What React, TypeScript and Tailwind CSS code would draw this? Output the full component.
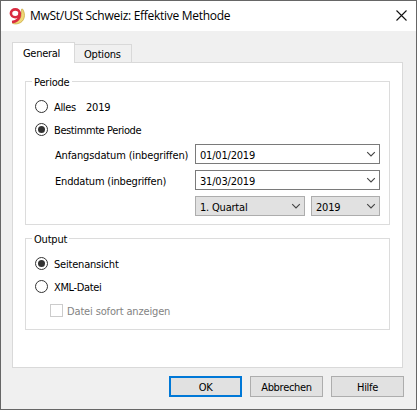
import React from 'react';

const Chevron = () => (
  <svg className="block h-[6px] w-[10px] shrink-0" viewBox="0 0 10 6" fill="none">
    <path d="M1.2 1.2L5 5L8.8 1.2" stroke="#444" strokeWidth="1.1" />
  </svg>
);

const Radio = ({ checked = false }: { checked?: boolean }) => (
  <span className="flex h-[13px] w-[13px] shrink-0 items-center justify-center rounded-full border border-[#333] bg-white">
    {checked && <span className="h-[7px] w-[7px] rounded-full bg-[#333]" />}
  </span>
);

const Combo = ({ text, size, muted = false }: { text: string; size: string; muted?: boolean }) => (
  <div
    className={`flex h-5 items-center justify-between border pr-[3px] pl-1 ${size} ${
      muted ? 'border-[#adadad] bg-[#e1e1e1]' : 'border-[#7a7a7a] bg-white'
    }`}
  >
    <span className="pt-[3px]">{text}</span>
    <Chevron />
  </div>
);

const Group = ({ title, size, children }: { title: string; size: string; children: React.ReactNode }) => (
  <section className={`w-[365px] border border-[#dcdcdc] ${size}`}>
    <h2 className="ml-[6px] -mt-[7px] h-[14px] w-fit bg-white px-[2px] leading-[16px]">{title}</h2>
    {children}
  </section>
);

const Button = ({ text, primary = false }: { text: string; primary?: boolean }) => (
  <button
    className={`flex h-[21px] w-[73px] items-center justify-center bg-[#e1e1e1] tracking-[-0.3px] ${
      primary ? 'border-2 border-[#0078d7]' : 'border border-[#adadad]'
    }`}
  >
    <span className="pt-[2px]">{text}</span>
  </button>
);

export default function App() {
  return (
    <div className="flex h-[410px] w-[417px] flex-col overflow-hidden border border-[#666] bg-[#f0f0f0] font-['DejaVu_Sans_Condensed','DejaVu_Sans',sans-serif] text-[11px] leading-[14px] tracking-[-0.2px] whitespace-nowrap text-black">
      <header className="flex h-[30px] shrink-0 items-center justify-between bg-white pr-[9px] pl-[8px]">
        <div className="flex items-center gap-[5px]">
          <svg className="h-[17px] w-4" viewBox="0 0 16 17" fill="none">
            <path d="M13.500 1C17 6 16 14 9 15.600C6.500 16.200 4.500 16 3.500 15C10 14 13.500 9 12.500 1.200Z" fill="#f0d878" stroke="#c4a436" strokeWidth="0.7" />
            <ellipse cx="6.3" cy="5.3" rx="4.4" ry="3.9" stroke="#d92b40" strokeWidth="2.6" />
            <path d="M10.700 4.500C11.400 10 8.500 13.600 3 14" stroke="#d92b40" strokeWidth="2.6" />
          </svg>
          <h1 className="font-['Open_Sans','Noto_Sans',sans-serif] text-[12px] leading-4 tracking-[-0.28px]">MwSt/USt Schweiz: Effektive Methode</h1>
        </div>
        <svg className="mb-px h-[11px] w-[11px]" viewBox="0 0 11 11" fill="none">
          <path d="M0.5 0.5L10.5 10.5M10.5 0.5L0.5 10.5" stroke="#111" strokeWidth="1.1" />
        </svg>
      </header>

      <div className="mt-[11px] ml-[11px] flex h-[21px] shrink-0 items-end">
        <div className="relative z-10 h-[21px] w-[63px] border border-b-0 border-[#d9d9d9] bg-white pt-[4px] pl-[10px] tracking-[-0.3px]">General</div>
        <div className="h-[19px] w-[57px] border border-l-0 border-[#d9d9d9] bg-[#f0f0f0] pt-[3px] pl-[9px]">Options</div>
      </div>

      <main className="-mt-px ml-[11px] h-[306px] w-[391px] shrink-0 border border-[#d9d9d9] bg-white pt-[18px] pl-[12px]">
        <Group title="Periode" size="h-[144px]">
          <div className="flex flex-col pl-[9px]">
            <div className="mt-[11px] flex h-[14px] items-start">
              <Radio />
              <span className="ml-[6px] w-8 pt-px tracking-[-0.35px]">Alles</span>
              <span className="pt-px">2019</span>
            </div>
            <div className="mt-[9px] flex h-[14px] items-start gap-[6px]">
              <Radio checked />
              <span className="pt-px tracking-[-0.4px]">Bestimmte Periode</span>
            </div>
          </div>
          <div className="mt-[7px] ml-[29px] grid grid-cols-[140px_185px] gap-y-[6px]">
            <span className="h-5 leading-[24px] tracking-[-0.15px]">Anfangsdatum (inbegriffen)</span>
            <Combo text="01/01/2019" size="w-[185px]" />
            <span className="h-5 leading-[24px]">Enddatum (inbegriffen)</span>
            <Combo text="31/03/2019" size="w-[185px]" />
            <div className="col-start-2 flex justify-between">
              <Combo text="1. Quartal" size="w-[110px]" muted />
              <Combo text="2019" size="w-[69px]" muted />
            </div>
          </div>
        </Group>

        <Group title="Output" size="mt-[13px] h-[92px]">
          <div className="flex flex-col pl-[9px]">
            <div className="mt-[11px] flex h-[14px] items-start gap-[6px]">
              <Radio checked />
              <span className="pt-px">Seitenansicht</span>
            </div>
            <div className="mt-[9px] flex h-[14px] items-start gap-[6px]">
              <Radio />
              <span className="pt-px tracking-[-0.35px]">XML-Datei</span>
            </div>
            <div className="mt-[10px] ml-[15px] flex h-[14px] items-start gap-[4px] text-[#838383]">
              <span className="h-[13px] w-[13px] border border-[#ccc] bg-white" />
              <span className="pt-px tracking-[-0.15px]">Datei sofort anzeigen</span>
            </div>
          </div>
        </Group>
      </main>

      <footer className="mt-[8px] ml-[168px] flex gap-2">
        <Button text="OK" primary />
        <Button text="Abbrechen" />
        <Button text="Hilfe" />
      </footer>
    </div>
  );
}
